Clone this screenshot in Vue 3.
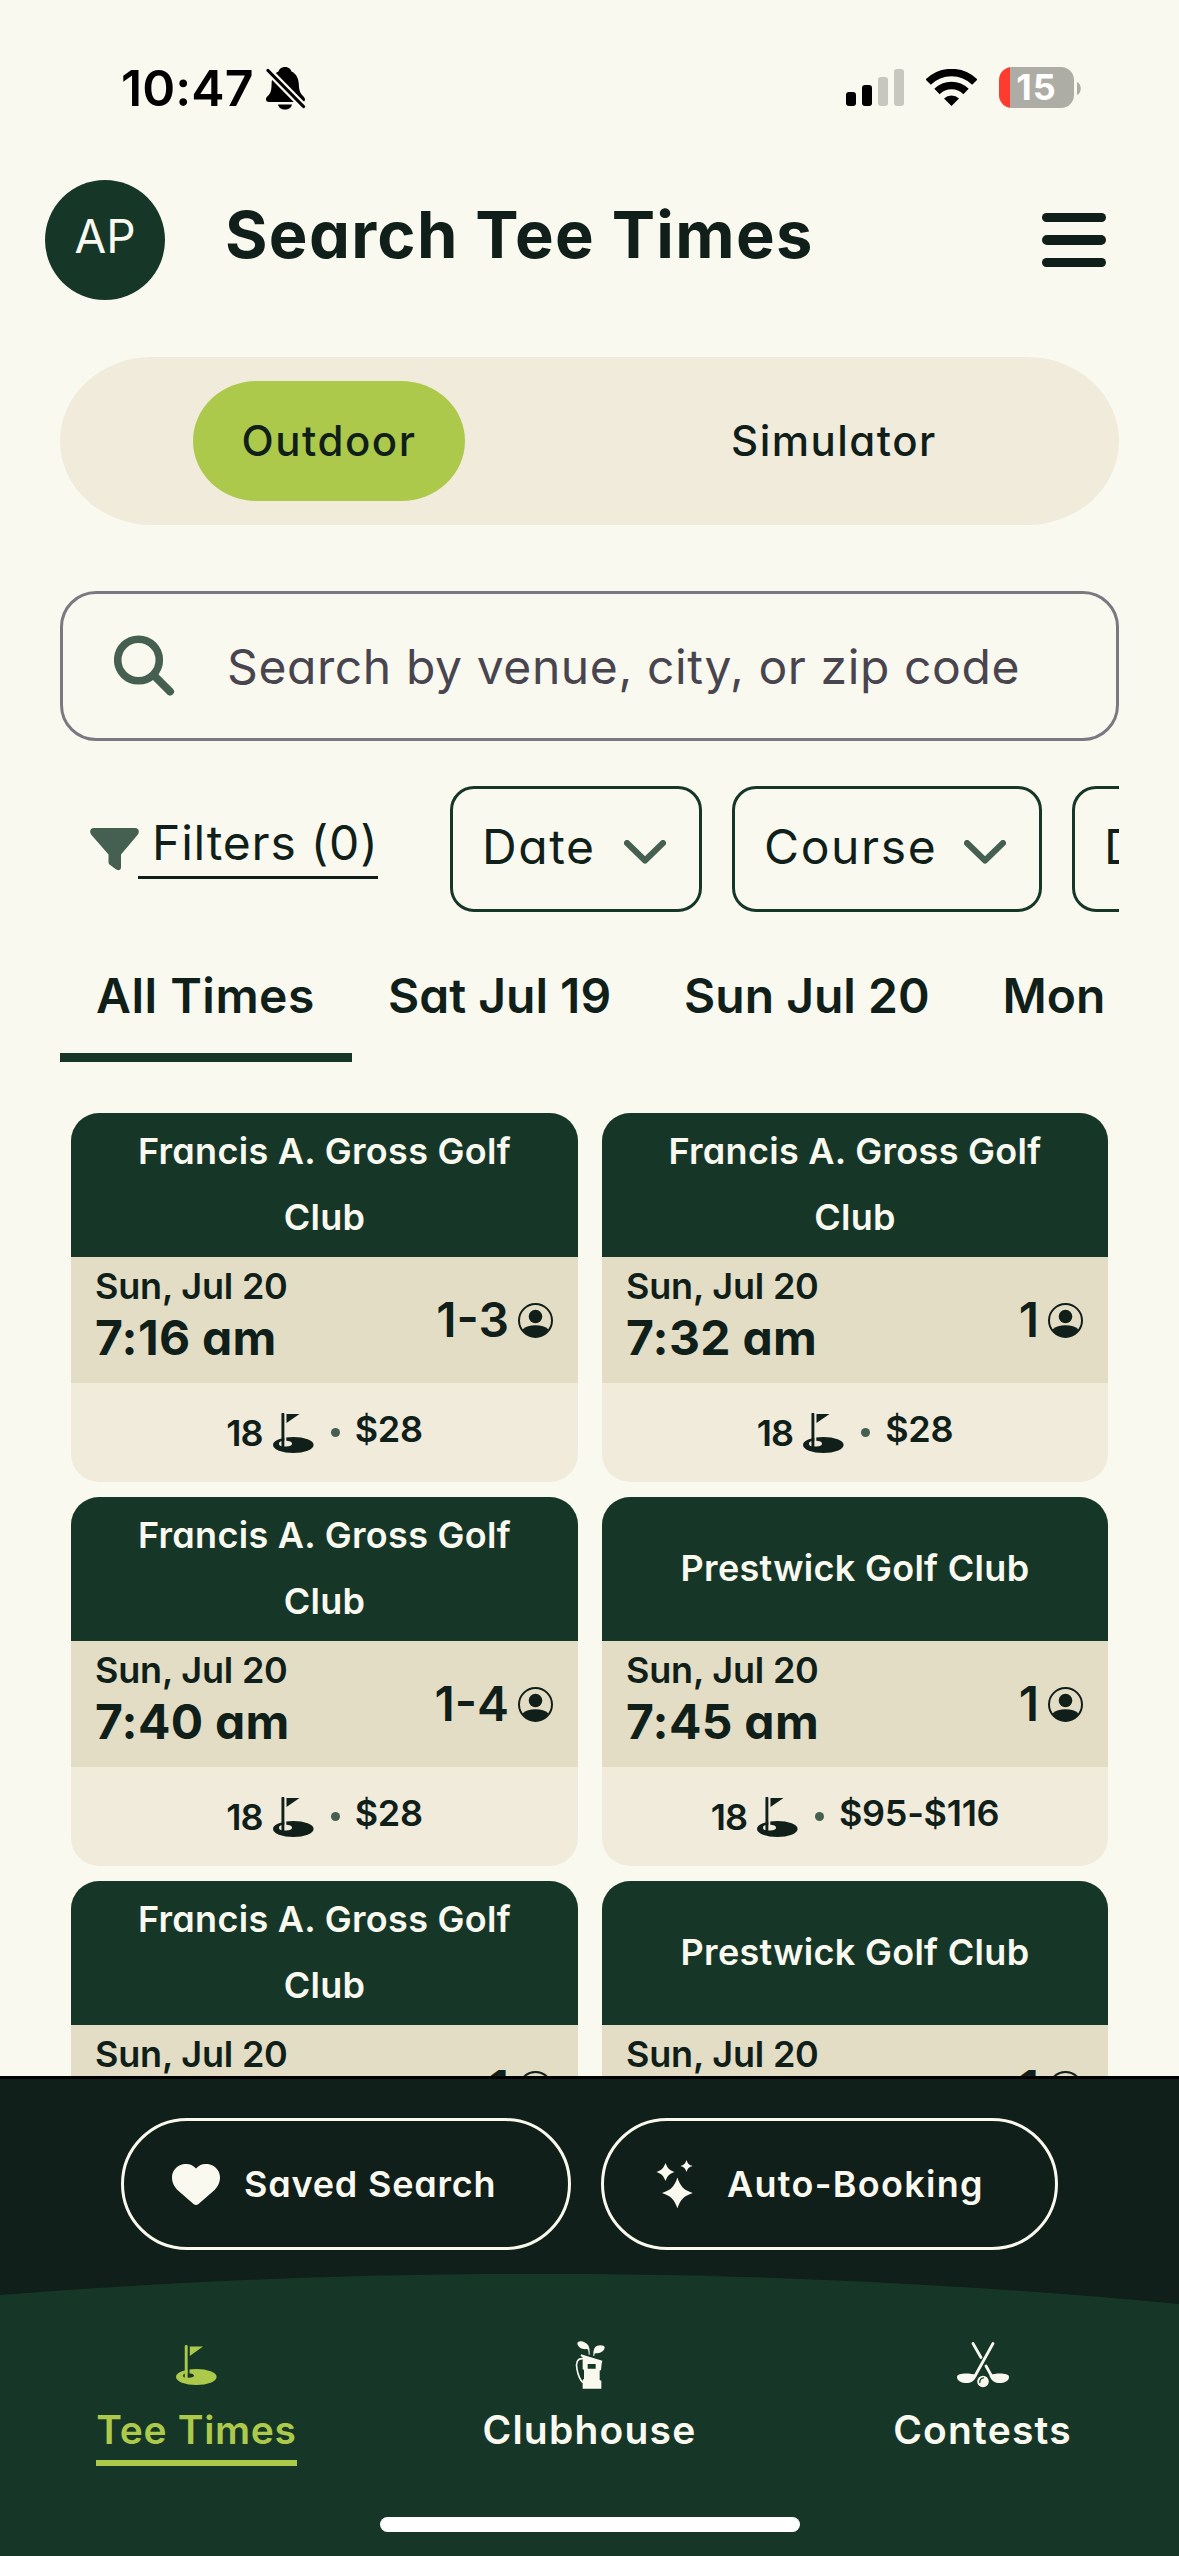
<script setup>
const modes = ['Outdoor', 'Simulator']
const chips = [
  { label: 'Date', width: 252 },
  { label: 'Course', width: 310 },
  { label: 'Duration', width: 330 },
]
const days = ['All Times', 'Sat Jul 19', 'Sun Jul 20', 'Mon Jul 21']
const gross = 'Francis A. Gross Golf Club'
const prestwick = 'Prestwick Golf Club'
const cards = [
  { club: gross, time: '7:16 am', players: '1-3', price: '$28' },
  { club: gross, time: '7:32 am', players: '1', price: '$28' },
  { club: gross, time: '7:40 am', players: '1-4', price: '$28' },
  { club: prestwick, time: '7:45 am', players: '1', price: '$95-$116' },
  { club: gross, time: '7:48 am', players: '1', price: '$28' },
  { club: prestwick, time: '7:54 am', players: '1', price: '$95-$116' },
]
</script>

<template>
  <div class="screen">
    <main class="content">
      <div class="status">
        <span class="clock">10:47</span>
        <svg class="bell" width="40" height="43" viewBox="0 0 40 43">
          <path d="M19 0C23 0 25 2.5 25.500 4.500C30 6.500 32.500 11 32.800 17C33 23 34 26 37 29C38.500 30.500 39 31.500 39 32.500C39 34 38 35 36 35H3C1 35 0 34 0 32.300C0 31 .7 30 2 28.800C5 26 5.400 23 5.600 17C5.800 11 8 6.500 12.500 4.500C13 2.500 15 0 19 0ZM12 37.500H26C25.500 40.500 22.500 42.500 19 42.500C15.500 42.500 12.500 40.500 12 37.500Z" />
          <path d="M2 3.500L37.500 39.500" stroke="#faf9f0" stroke-width="7.500" />
          <path d="M2 3.500L37.500 39.500" stroke="#000" stroke-width="3.200" stroke-linecap="round" />
        </svg>
        <svg class="signal" width="58" height="37" viewBox="0 0 58 37">
          <rect x="0" y="23" width="10" height="14" rx="3" />
          <rect x="16" y="16" width="10" height="21" rx="3" />
          <rect x="32" y="8" width="10" height="29" rx="3" fill="#c8c7bf" />
          <rect x="48" y="0" width="10" height="37" rx="3" fill="#c8c7bf" />
        </svg>
        <svg class="wifi" width="51" height="37" viewBox="0 0 51 37">
          <path d="M2.200 13.200A33 33 0 0 1 48.800 13.200M11 22.500A20.500 20.500 0 0 1 40 22.500" fill="none" stroke="#000" stroke-width="7.500" />
          <path d="M25.500 37L18 29.500A11 11 0 0 1 33 29.500Z" />
        </svg>
        <div class="battery"><span>15</span></div>
        <svg class="nub" width="4" height="13" viewBox="0 0 4 13"><path d="M0 0C5 2 5 11 0 13Z" fill="#aeada5" /></svg>
      </div>

      <header class="header">
        <div class="avatar">AP</div>
        <h1>Search Tee Times</h1>
        <div class="menu"><i /><i /><i /></div>
      </header>

      <div class="toggle">
        <span v-for="(m, i) in modes" :key="m" class="mode" :class="{ on: i === 0 }">{{ m }}</span>
      </div>

      <div class="search">
        <svg width="62" height="62" viewBox="0 0 62 62" fill="none" stroke="#456050" stroke-linecap="round">
          <circle cx="24.500" cy="25" r="20.800" stroke-width="7.600" />
          <path d="M40.500 41L56 56.500" stroke-width="8" />
        </svg>
        <span>Search by venue, city, or zip code</span>
      </div>

      <div class="filters">
        <svg width="49" height="43" viewBox="0 0 49 43"><path d="M4 0H45C49 0 50 4 47.500 7L31 26.500V39C31 42.500 28 43 25.500 41L19.500 36.500Q18.500 35.500 18.500 34V26.500L1.500 7C-1 4 0 0 4 0Z" fill="#456050" /></svg>
        <span class="filter-link">Filters (0)</span>
        <div v-for="c in chips" :key="c.label" class="chip" :style="{ width: c.width + 'px' }">
          <span>{{ c.label }}</span>
          <svg width="42" height="24" viewBox="0 0 42 24" fill="none" stroke="#456050" stroke-width="6" stroke-linecap="round" stroke-linejoin="round"><path d="M3 3L21 20.500L39 3" /></svg>
        </div>
      </div>

      <nav class="days">
        <span v-for="(d, i) in days" :key="d" :class="{ active: i === 0 }">{{ d }}</span>
      </nav>

      <section class="grid">
        <article v-for="c in cards" :key="c.time" class="card">
          <div class="club">{{ c.club }}</div>
          <div class="slot">
            <div class="when">
              <span class="date">Sun, Jul 20</span>
              <span class="time">{{ c.time }}</span>
            </div>
            <div class="players">
              <span>{{ c.players }}</span>
              <svg width="35" height="35" viewBox="0 0 35 35">
                <circle cx="17.500" cy="17.500" r="16.500" fill="none" stroke="#101f19" stroke-width="2" />
                <circle cx="17.500" cy="13.500" r="6.800" />
                <path d="M4.500 26.500C7.500 23.500 12 22.300 17.500 22.300S27.500 23.500 30.500 26.500C27.500 31.500 23 34 17.500 34S7.500 31.500 4.500 26.500Z" />
              </svg>
            </div>
          </div>
          <div class="foot">
            <span class="holes">18</span>
            <svg class="flag" width="41" height="40" viewBox="0 0 41 40">
              <path fill-rule="evenodd" d="M0 32A20.300 8 0 1 0 40.600 32A20.300 8 0 1 0 0 32ZM6 30.700C6 28.300 9 27.500 12 27.800C17 27.800 19 29 19 30.700C19 32.500 16 33.500 12.500 33.500S6 33 6 30.700Z" />
              <path d="M12.300 22V31" stroke="#f1ebdc" stroke-width="2" />
              <path d="M9.900 1V33.500" stroke="#101f19" stroke-width="2.900" stroke-linecap="round" />
              <path d="M13.500 1H26.500L13.500 10Z" />
            </svg>
            <i class="dot" />
            <span class="price">{{ c.price }}</span>
          </div>
        </article>
      </section>
    </main>

    <div class="actions">
      <div class="pill saved">
        <svg width="48" height="41" viewBox="0 0 48 41"><path d="M24 4.500C20 0 15-.5 11 .3C4 1.800 0 7.500 0 13.500C0 19 2.500 23 6 26.500L21.500 40Q24 42 26.500 40L42 26.500C45.500 23 48 19 48 13.500C48 7.500 44 1.800 37 .3C33-.5 28 0 24 4.500Z" /></svg>
        <span>Saved Search</span>
      </div>
      <div class="pill auto">
        <svg width="38" height="48" viewBox="0 0 38 48">
          <path d="M21.400 17.500C24.500 26.500 27.500 30 36.800 33C27.500 36 24.500 39.500 21.400 48.300C18.300 39.500 15.300 36 6 33C15.300 30 18.300 26.500 21.400 17.500Z" />
          <path d="M9.500 3C11.500 8.200 13.300 10.300 18.500 12C13.300 13.700 11.500 15.800 9.500 21C7.500 15.800 5.700 13.700 .5 12C5.700 10.300 7.500 8.200 9.500 3Z" />
          <path d="M30.500 0C31.700 3.600 32.900 5 36.500 6C32.900 7 31.700 8.400 30.500 12C29.300 8.400 28.100 7 24.500 6C28.100 5 29.300 3.600 30.500 0Z" />
        </svg>
        <span>Auto-Booking</span>
      </div>
    </div>

    <svg class="curve" width="1179" height="32" viewBox="0 0 1179 32"><path d="M0 21Q589.500-25.500 1179 30V32H0Z" fill="#163728" /></svg>

    <footer class="tabbar">
      <div class="tabs">
        <div class="tab current">
          <svg width="41" height="50" viewBox="0 0 41 50">
            <path fill-rule="evenodd" d="M0 37A20.300 8 0 1 0 40.600 37A20.300 8 0 1 0 0 37ZM7 35.700C7 34 9 33.300 12 33.300C16 33.300 18 34.500 18 35.700C18 37 15.500 37.700 12.500 37.700S7 37.500 7 35.700Z" />
            <path d="M12.500 28V36" stroke="#163728" stroke-width="2" />
            <path d="M10.200 6.500V38" stroke="#adc94b" stroke-width="2.900" stroke-linecap="round" />
            <path d="M13.800 6.500H27L13.800 16Z" />
          </svg>
          <span>Tee Times</span>
        </div>
        <div class="tab">
          <svg width="30" height="50" viewBox="46 32 90 150">
            <path d="M53 43C54 34 68 34 78 41C88 46 91 58 90 76L87 76C87 66 86 60 82 59C68 61 56 55 53 43Z" />
            <path d="M135 54C134 46 112 46 106 54C101 62 101 70 101 80L104 80C104 74 105 72 108 72C122 72 134 66 135 54Z" />
            <path fill-rule="evenodd" d="M64 75L128 94L126 103L124 122L120 124V152L125 154V178H69V152L73 148V122L69 119V84L63 80ZM84 104V118H108V104Z" />
            <path d="M70 88C52 86 48 102 52 120C55 136 60 150 70 160" fill="none" stroke="#faf9f0" stroke-width="5" />
          </svg>
          <span>Clubhouse</span>
        </div>
        <div class="tab">
          <svg width="52" height="50" viewBox="0 0 52 50">
            <g fill="none" stroke="#faf9f0" stroke-width="2.800" stroke-linecap="round"><path d="M16 3.500L24 17.500M29 26L34 35M36 3.500L18 36" /></g>
            <path d="M18.500 35C14 33 0 32.500 0 37C0 41.500 6 43.500 11 43C15 42.500 17.500 40.500 19.500 36Z" />
            <path d="M33.500 35C38 33 52 32.500 52 37C52 41.500 46 43.500 41 43C37 42.500 34.500 40.500 32.500 36Z" />
            <circle cx="26" cy="41.500" r="5.800" />
            <path d="M22.800 42.500C22.500 40 24 38 26.500 37.800" fill="none" stroke="#163728" stroke-width="1.300" stroke-linecap="round" />
          </svg>
          <span>Contests</span>
        </div>
      </div>
      <div class="home" />
    </footer>
  </div>
</template>

<style>
body { background: #faf9f0; }
</style>

<style scoped>
.screen {
  width: 1179px; height: 2556px; display: flex; flex-direction: column; overflow: hidden;
  background: #faf9f0; color: #101f19; fill: #101f19;
  font-family: Inter, "Noto Sans", sans-serif; font-feature-settings: "cv11"; white-space: nowrap;
}
svg { flex: none; display: block; }
.content { flex: none; height: 2076px; overflow: hidden; }

.status { height: 180px; box-sizing: border-box; padding: 58px 98px 0 121px; display: flex; align-items: flex-start; color: #000; fill: #000; }
.clock { font-size: 50px; font-weight: 600; line-height: 60px; letter-spacing: 0.1px; width: 145px; }
.bell { margin-top: 9px; }
.signal { margin: 11px 22px 0 auto; }
.wifi { margin: 11px 22px 0 0; }
.battery {
  width: 75px; height: 41px; margin-top: 9px; border-radius: 13px; text-align: center;
  background: linear-gradient(90deg, #ff3b30 11px, #aeada5 11px); color: #fff;
  font-size: 36px; font-weight: 700; line-height: 41px; letter-spacing: 1px;
}
.nub { margin: 24px 0 0 3px; }

.header { height: 120px; padding: 0 73px 0 45px; display: flex; align-items: center; }
.avatar {
  width: 120px; height: 120px; border-radius: 50%; background: #163728; color: #faf9f0;
  font-size: 46px; line-height: 113px; text-align: center;
}
h1 { margin: 0 auto 0 60px; font-size: 65px; font-weight: 700; line-height: 80px; letter-spacing: 1.3px; padding-bottom: 11px; }
.menu { display: flex; flex-direction: column; gap: 13px; width: 64px; }
.menu i { height: 9.5px; border-radius: 5px; background: #101f19; }

.toggle {
  margin: 57px 60px 0; height: 168px; box-sizing: border-box; border-radius: 92px / 84px; background: #f1ebdc;
  display: flex; align-items: center; gap: 218px; padding-left: 133px;
}
.mode { height: 120px; line-height: 120px; font-size: 42px; font-weight: 500; letter-spacing: 1.5px; }
.mode.on { width: 272px; text-align: center; border-radius: 64px / 60px; background: #adc94b; }
.mode:not(.on) { padding-left: 48px; }

.search {
  margin: 66px 60px 0; height: 150px; box-sizing: border-box; border: 3px solid #7b7881; border-radius: 36px;
  display: flex; align-items: center; padding-left: 51px; color: #49454f;
}
.search span { margin-left: 51px; font-size: 48px; line-height: 60px; letter-spacing: 0.6px; padding-top: 2px; }

.filters { margin: 45px 60px 0; height: 126px; padding-left: 30px; display: flex; align-items: center; overflow: hidden; }
.filter-link {
  flex: none; width: 240px; box-sizing: border-box; padding-left: 14px; margin: 0 72px 8px -1px; font-size: 48px; letter-spacing: 0.8px;
  line-height: 63px; border-bottom: 3px solid #101f19; height: 68px;
}
.chip {
  flex: none; box-sizing: border-box; height: 126px; border: 3px solid #163728; border-radius: 24px; margin-right: 30px;
  display: flex; align-items: center; justify-content: space-between; padding: 0 33px 0 29px;
}
.chip span { font-size: 48px; line-height: 60px; letter-spacing: 1.6px; padding-bottom: 5px; }
.chip svg { margin-top: 6px; }

.days { margin: 40px 60px 0; display: flex; overflow: hidden; }
.days span {
  flex: none; height: 110px; box-sizing: border-box; padding: 14px 37px 0 36px; font-size: 48px; font-weight: 600; line-height: 60px;
  border-bottom: 9px solid transparent;
}
.days .active { width: 292px; padding-right: 0; letter-spacing: 0.5px; border-color: #163728; }

.grid { margin: 51px 71px 0; display: grid; grid-template-columns: 507px 506px; column-gap: 24px; row-gap: 15px; }
.card { height: 369px; border-radius: 28px; overflow: hidden; background: #f1ebdc; }
.club {
  height: 144px; box-sizing: border-box; background: #163728; color: #faf9f0; display: flex; align-items: center; justify-content: center; text-align: center;
  padding: 0 50px 2px; font-size: 36px; font-weight: 600; line-height: 66px; letter-spacing: 0.3px; white-space: normal;
}
.slot { height: 126px; box-sizing: border-box; background: #e4ddc5; padding: 0 25px 0 24px; display: flex; justify-content: space-between; align-items: center; }
.when { display: flex; flex-direction: column; padding-bottom: 17px; }
.date { font-size: 36px; font-weight: 600; line-height: 52px; letter-spacing: -0.2px; }
.time { font-size: 48px; font-weight: 700; line-height: 51px; letter-spacing: 0.3px; }
.players { display: flex; align-items: center; gap: 9px; font-size: 48px; font-weight: 600; line-height: 60px; }
.foot { height: 99px; display: flex; align-items: center; justify-content: center; font-size: 36px; font-weight: 600; line-height: 50px; }
.holes { letter-spacing: -1px; }
.flag { margin-left: 10px; }
.dot { width: 9px; height: 9px; border-radius: 50%; background: #456050; margin: 0 15px 0 17px; }
.price { padding-bottom: 7px; letter-spacing: -0.3px; }

.actions {
  flex: none; height: 198px; box-sizing: border-box; border-top: 3px solid #000; background: #101f19; color: #faf9f0; fill: #faf9f0;
  display: flex; justify-content: center; gap: 30px; padding-top: 39px;
}
.pill {
  height: 132px; box-sizing: border-box; border: 3px solid #faf9f0; border-radius: 66px; display: flex; align-items: center;
  font-size: 36px; font-weight: 600; line-height: 50px;
}
.saved { width: 450px; padding-left: 48px; gap: 24px; letter-spacing: 0.8px; }
.auto { width: 457px; padding-left: 52px; gap: 33px; letter-spacing: 1.3px; }

.curve { background: #101f19; margin-bottom: -1px; }

.tabbar { flex: 1; background: #163728; color: #faf9f0; display: flex; flex-direction: column; align-items: center; }
.tabs { flex: none; box-sizing: border-box; width: 1179px; display: flex; height: 212px; padding-top: 35px; }
.tab { flex: 1; display: flex; flex-direction: column; align-items: center; fill: #faf9f0; }
.tab span { margin-top: 15px; font-size: 39px; font-weight: 600; line-height: 50px; height: 55px; letter-spacing: 1.2px; border-bottom: 6px solid transparent; }
.tab.current { color: #adc94b; fill: #adc94b; }
.tab.current span { border-color: #adc94b; letter-spacing: 0.7px; }
.home { flex: none; width: 420px; height: 15px; border-radius: 8px; background: #fff; }
</style>
